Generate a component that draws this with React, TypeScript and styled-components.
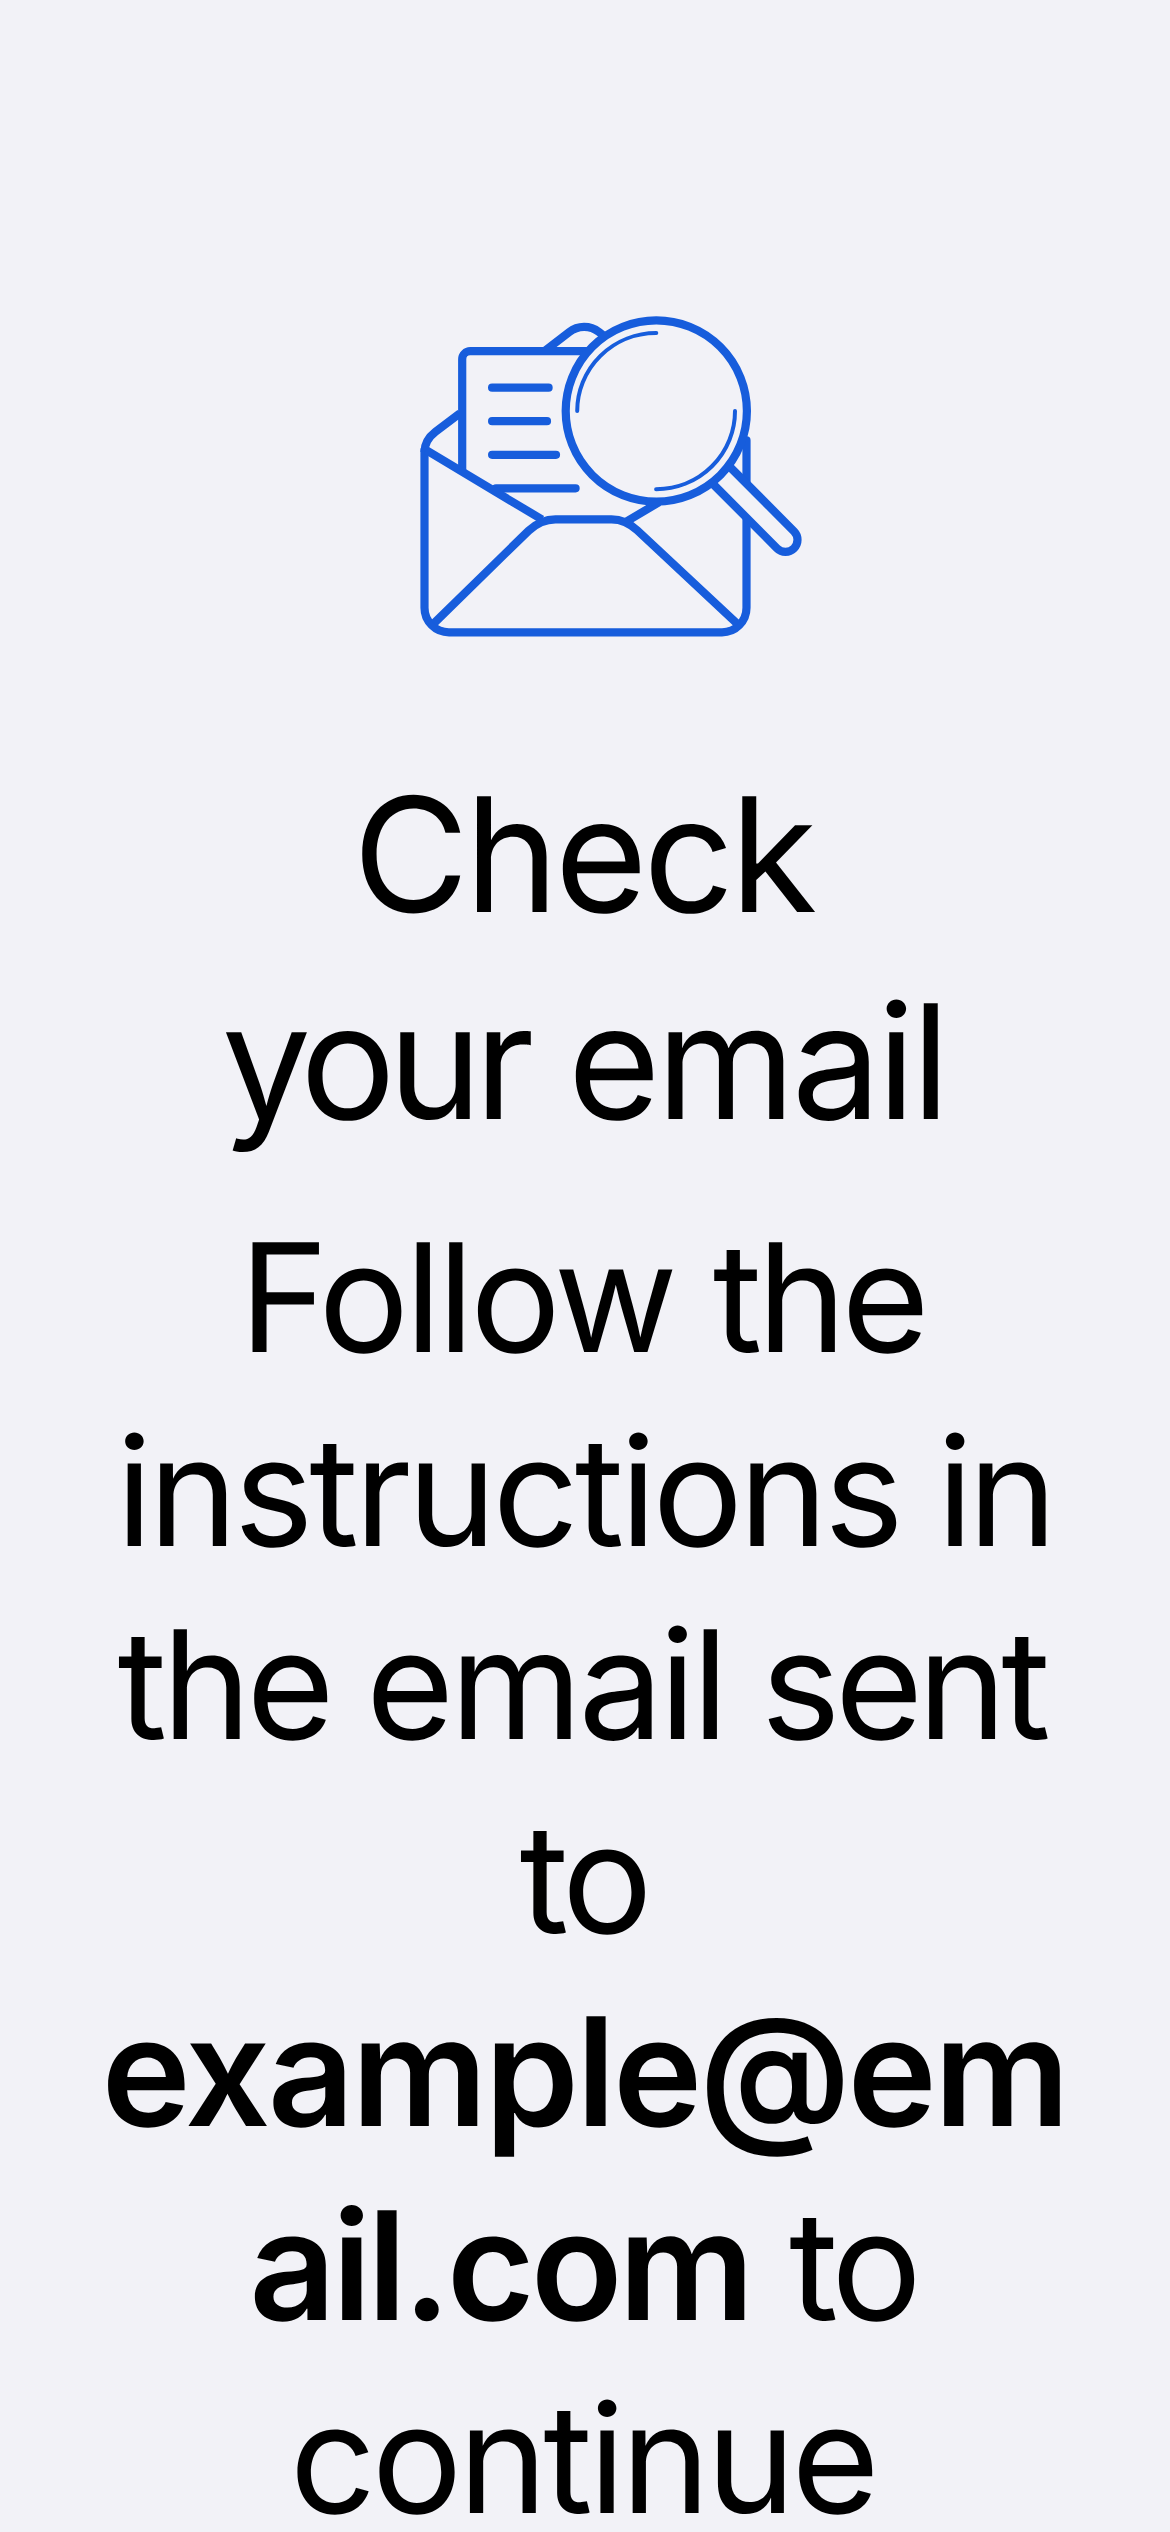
import React from "react";
import styled, { createGlobalStyle } from "styled-components";

const GlobalStyle = createGlobalStyle`
  html, body {
    margin: 0;
    background: #f2f2f7;
  }
`;

const Screen = styled.main`
  box-sizing: border-box;
  width: 1170px;
  height: 2532px;
  padding-top: 300px;
  overflow: hidden;
  display: flex;
  flex-direction: column;
  align-items: center;
  background: #f2f2f7;
  color: #000;
  font-family: Inter, "Liberation Sans", sans-serif;
  text-rendering: geometricPrecision;
`;

const Illustration = styled.svg`
  flex: none;
  display: block;
  width: 438px;
  height: 350px;
`;

const Title = styled.h1`
  flex: none;
  width: 100%;
  margin: 102.25px 0 0;
  font-size: 159px;
  font-weight: 400;
  line-height: 207px;
  text-align: center;
`;

const Message = styled.p`
  flex: none;
  width: 100%;
  margin: 35.75px 0 0;
  font-size: 151px;
  font-weight: 400;
  line-height: 193.5px;
  text-align: center;
`;

const Line = styled.span<{ $inset: number; $gap?: number }>`
  display: block;
  box-sizing: border-box;
  padding-right: ${(p) => p.$inset}px;
  white-space: nowrap;
  word-spacing: ${(p) => p.$gap ?? 0}px;
`;

const Word = styled.span<{ $tracking: number }>`
  letter-spacing: ${(p) => p.$tracking}px;
`;

const Address = styled.strong<{ $tracking: number }>`
  font-weight: 600;
  letter-spacing: ${(p) => p.$tracking}px;
`;

function EmailSearchIllustration() {
  return (
    <Illustration
      viewBox="366 300 438 350"
      fill="none"
      stroke="#175ddc"
      strokeWidth="8.2"
      strokeLinecap="round"
      aria-hidden="true"
    >
      {/* back flap */}
      <path strokeLinecap="butt" d="M460 413.2 L435.5 431.8 C428.5 437.2 424.5 443.5 424.5 452" />
      <path strokeLinecap="butt" d="M544 351.5 L569 332.3 C578 325.2 590 325.2 599 332 L604 336" />
      {/* letter */}
      <path strokeLinecap="butt" d="M462.2 471 V359.2 A8 8 0 0 1 470.2 351.2 H590" />
      <path d="M492.1 387.7 H548.6 M492.1 421.2 H547 M492.1 454.8 H556 M496 488.3 H575.6" />
      {/* envelope */}
      <path d="M424.5 450 V607.8 A24.5 24.5 0 0 0 449 632.3 H722 A24.5 24.5 0 0 0 746.5 607.8 V440.3" />
      <path strokeLinecap="butt" d="M426 450.1 L542 519.5 M626.5 521.6 L659 502.2" />
      <path
        strokeLinecap="butt"
        d="M434 623.2 L528.6 530.7 C536.5 523.2 545.5 519.3 555.5 519.3 H611.5 C621 519.3 629.5 523 637.3 530.4 L737.5 624"
      />
      {/* magnifying glass */}
      <path
        fill="#f2f2f7"
        strokeLinecap="butt"
        d="M727 464 L794 531.3 A12 12 0 0 1 777 548.3 L710 481"
      />
      <circle cx="656.3" cy="411" r="90.6" fill="#f2f2f7" />
      <path strokeWidth="4" d="M577.2 411 A79 78 0 0 1 656.3 333.1 M735 411 A79 78 0 0 1 656.1 489.2" />
    </Illustration>
  );
}

export default function App() {
  return (
    <>
      <GlobalStyle />
      <Screen>
        <EmailSearchIllustration />
        <Title>
          <Line $inset={4}>
            <Word $tracking={-4.1}>Check</Word>
          </Line>
          <Line $inset={2.4} $gap={-3.8}>
            <Word $tracking={-7.6}>your</Word> <Word $tracking={-4}>email</Word>
          </Line>
        </Title>
        <Message>
          <Line $inset={6} $gap={-3.4}>
            <Word $tracking={-4}>Follow</Word> <Word $tracking={-4.9}>the</Word>
          </Line>
          <Line $inset={2.2} $gap={-5.3}>
            <Word $tracking={-4.1}>instructions</Word> <Word $tracking={-5.4}>in</Word>
          </Line>
          <Line $inset={7.4} $gap={-6.4}>
            <Word $tracking={-4.8}>the</Word> <Word $tracking={-3.9}>email</Word>{" "}
            <Word $tracking={-5.5}>sent</Word>
          </Line>
          <Line $inset={3.6}>
            <Word $tracking={-5.6}>to</Word>
          </Line>
          <Line $inset={1.4}>
            <Address $tracking={-2.8}>example@em</Address>
          </Line>
          <Line $inset={4.4} $gap={-3.8}>
            <Address $tracking={-4.1}>ail.com</Address> <Word $tracking={-5.6}>to</Word>
          </Line>
          <Line $inset={5}>
            <Word $tracking={-4.1}>continue</Word>
          </Line>
        </Message>
      </Screen>
    </>
  );
}
